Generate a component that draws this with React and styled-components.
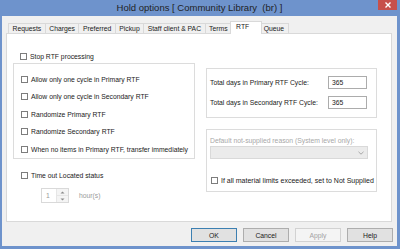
import React from 'react';
import styled, { createGlobalStyle } from 'styled-components';

const GlobalStyle = createGlobalStyle`
  html, body {
    margin: 0;
    padding: 0;
  }
  body {
    font-family: "Liberation Sans", Arial, sans-serif;
    background: #6e93cc;
  }
`;

const Frame = styled.div`
  width: 400px;
  height: 249px;
  box-sizing: border-box;
  display: flex;
  flex-direction: column;
  background: #6e93cc;
  padding: 0 3px 3px 2px;
`;

const TitleBar = styled.div`
  height: 16px;
  flex: none;
  display: grid;
  grid-template-columns: 1fr auto 1fr;
  align-items: start;
`;

const Title = styled.div`
  grid-column: 2;
  font-size: 9.5px;
  line-height: 15px;
  color: #1f1f1f;
  white-space: pre;
`;

const CloseBtn = styled.div`
  grid-column: 3;
  justify-self: end;
  width: 19px;
  height: 10px;
  background: #c7504b;
  display: flex;
  align-items: center;
  justify-content: center;
`;

const Client = styled.div`
  flex: 1;
  display: flex;
  flex-direction: column;
  background: #f0f0f0;
  padding: 5px 5px 4px 4px;
  min-height: 0;
`;

const TabRow = styled.div`
  height: 12px;
  flex: none;
  display: flex;
  align-items: flex-end;
  padding-left: 2px;
`;

const Tab = styled.div`
  box-sizing: border-box;
  height: ${(p) => (p.$active ? 13 : 10)}px;
  margin: ${(p) => (p.$active ? '0 -2px -1px -2px' : '0 0 0 -1px')};
  padding: ${(p) => (p.$active ? '1px 12px 0 5px' : '1px 3.5px 0')};
  border: 1px solid #d9d9d9;
  border-bottom: none;
  background: ${(p) => (p.$active ? '#ffffff' : '#f0f0f0')};
  font-size: 6.8px;
  line-height: 8px;
  color: #1a1a1a;
  white-space: pre;
  position: relative;
  z-index: ${(p) => (p.$active ? 1 : 0)};

  &:first-child {
    margin-left: 0;
  }
`;

const Panel = styled.div`
  flex: 1;
  background: #ffffff;
  border: 1px solid #d9d9d9;
  padding: 0 14px 0 6px;
  display: flex;
  flex-direction: column;
  font-size: 6.8px;
  color: #1a1a1a;
`;

const CheckRow = styled.label`
  display: flex;
  align-items: center;
  gap: 3px;
  height: 10px;
  flex: none;
  white-space: pre;
  font-size: ${(p) => p.$size || 6.8}px;
  margin-top: ${(p) => p.$top || 0}px;
  padding-left: ${(p) => p.$indent || 0}px;
`;

const Box = styled.span`
  width: 7px;
  height: 7px;
  box-sizing: border-box;
  border: 1px solid #7d7d7d;
  background: #ffffff;
  flex: none;
`;

const Columns = styled.div`
  display: grid;
  grid-template-columns: 182px 171px;
  column-gap: 11px;
  align-items: start;
  margin-top: 2px;
`;

const Column = styled.div`
  display: flex;
  flex-direction: column;
  padding-top: ${(p) => p.$top || 0}px;
  gap: ${(p) => p.$gap || 0}px;
`;

const GroupBox = styled.div`
  box-sizing: border-box;
  border: 1px solid #dcdcdc;
  height: ${(p) => p.$height}px;
  display: flex;
  flex-direction: column;
`;

const CheckList = styled(GroupBox)`
  padding: 10.5px 6px 0 7px;
  gap: 7.4px;
`;

const DaysBox = styled(GroupBox)`
  padding: 7px 9px 0 3px;
  gap: 7px;
`;

const DaysRow = styled.div`
  display: grid;
  grid-template-columns: 1fr 39px;
  align-items: center;
  height: 13px;
  white-space: pre;
`;

const NumInput = styled.div`
  box-sizing: border-box;
  height: 13px;
  border: 1px solid #acacac;
  padding-left: 3px;
  line-height: 11px;
  background: #ffffff;
`;

const ReasonBox = styled(GroupBox)`
  padding: 7px 8px 0 3px;
`;

const DisabledLabel = styled.div`
  line-height: 8px;
  color: #a8a8a8;
  white-space: pre;
`;

const Select = styled.div`
  box-sizing: border-box;
  margin-top: 1px;
  width: 158px;
  height: 13px;
  border: 1px solid #d9d9d9;
  background: #ebebeb;
  display: flex;
  align-items: center;
  justify-content: flex-end;
  padding-right: 3px;
`;

const SpinRow = styled.div`
  display: flex;
  align-items: center;
  gap: 10px;
  margin-top: 7.5px;
  padding-left: 28px;
  color: #9a9a9a;
`;

const Spinner = styled.div`
  box-sizing: border-box;
  width: 28px;
  height: 15px;
  border: 1px solid #d9d9d9;
  display: flex;
`;

const SpinValue = styled.div`
  flex: 1;
  padding-left: 4px;
  line-height: 13px;
  color: #9a9a9a;
`;

const SpinButtons = styled.div`
  width: 11px;
  display: flex;
  flex-direction: column;
  border-left: 1px solid #e6e6e6;
`;

const SpinHalf = styled.div`
  flex: 1;
  display: flex;
  align-items: center;
  justify-content: center;
  background: #f4f4f4;
  & + & {
    border-top: 1px solid #e6e6e6;
  }
`;

const ButtonRow = styled.div`
  flex: none;
  display: flex;
  justify-content: flex-end;
  gap: 6px;
  margin: 6px -1px 0 0;
`;

const Button = styled.div`
  box-sizing: border-box;
  width: 46px;
  height: 14px;
  display: flex;
  align-items: center;
  justify-content: center;
  font-size: 6.8px;
  border: 1px solid
    ${(p) => (p.$default ? '#3c7fb1' : p.$disabled ? '#d2d2d2' : '#adadad')};
  background: ${(p) => (p.$disabled ? '#f4f4f4' : '#e1e1e1')};
  color: ${(p) => (p.$disabled ? '#a3a3a3' : '#1a1a1a')};
`;

const tabs = ['Requests', 'Charges', 'Preferred', 'Pickup', 'Staff client & PAC', 'Terms', 'RTF', 'Queue'];

const cycleOptions = [
  'Allow only one cycle in Primary RTF',
  'Allow only one cycle in Secondary RTF',
  'Randomize Primary RTF',
  'Randomize Secondary RTF',
  'When no items in Primary RTF, transfer immediately',
];

const Arrow = ({ up }) => (
  <svg width="5" height="3" viewBox="0 0 5 3">
    <path d={up ? 'M0.5 2.5 L2.5 0.5 L4.5 2.5Z' : 'M0.5 0.5 L2.5 2.5 L4.5 0.5Z'} fill="#8a8a8a" />
  </svg>
);

const App = () => (
  <>
    <GlobalStyle />
    <Frame>
      <TitleBar>
        <Title>Hold options [ Community Library  (br) ]</Title>
        <CloseBtn>
          <svg width="6" height="6" viewBox="0 0 6 6">
            <path d="M0.5 0.5 L5.5 5.5 M5.5 0.5 L0.5 5.5" stroke="#ffffff" strokeWidth="1.4" />
          </svg>
        </CloseBtn>
      </TitleBar>
      <Client>
        <TabRow>
          {tabs.map((t) => (
            <Tab key={t} $active={t === 'RTF'}>
              {t}
            </Tab>
          ))}
        </TabRow>
        <Panel>
          <CheckRow $top={17} $indent={7}>
            <Box />
            Stop RTF processing
          </CheckRow>
          <Columns>
            <Column>
              <CheckList $height={96}>
                {cycleOptions.map((o) => (
                  <CheckRow key={o}>
                    <Box />
                    {o}
                  </CheckRow>
                ))}
              </CheckList>
              <CheckRow $top={11.5} $indent={8}>
                <Box />
                Time out Located status
              </CheckRow>
              <SpinRow>
                <Spinner>
                  <SpinValue>1</SpinValue>
                  <SpinButtons>
                    <SpinHalf>
                      <Arrow up />
                    </SpinHalf>
                    <SpinHalf>
                      <Arrow />
                    </SpinHalf>
                  </SpinButtons>
                </Spinner>
                hour(s)
              </SpinRow>
            </Column>
            <Column $top={5} $gap={11}>
              <DaysBox $height={50}>
                <DaysRow>
                  Total days in Primary RTF Cycle:
                  <NumInput>365</NumInput>
                </DaysRow>
                <DaysRow>
                  Total days in Secondary RTF Cycle:
                  <NumInput>365</NumInput>
                </DaysRow>
              </DaysBox>
              <ReasonBox $height={63}>
                <DisabledLabel>Default not-supplied reason (System level only):</DisabledLabel>
                <Select>
                  <svg width="6" height="4" viewBox="0 0 6 4">
                    <path d="M0.5 0.8 L3 3.2 L5.5 0.8" stroke="#a0a0a0" fill="none" strokeWidth="0.9" />
                  </svg>
                </Select>
                <CheckRow $top={16} $indent={1} $size={7}>
                  <Box />
                  If all material limits exceeded, set to Not Supplied
                </CheckRow>
              </ReasonBox>
            </Column>
          </Columns>
        </Panel>
        <ButtonRow>
          <Button $default>OK</Button>
          <Button>Cancel</Button>
          <Button $disabled>Apply</Button>
          <Button>Help</Button>
        </ButtonRow>
      </Client>
    </Frame>
  </>
);

export default App;
